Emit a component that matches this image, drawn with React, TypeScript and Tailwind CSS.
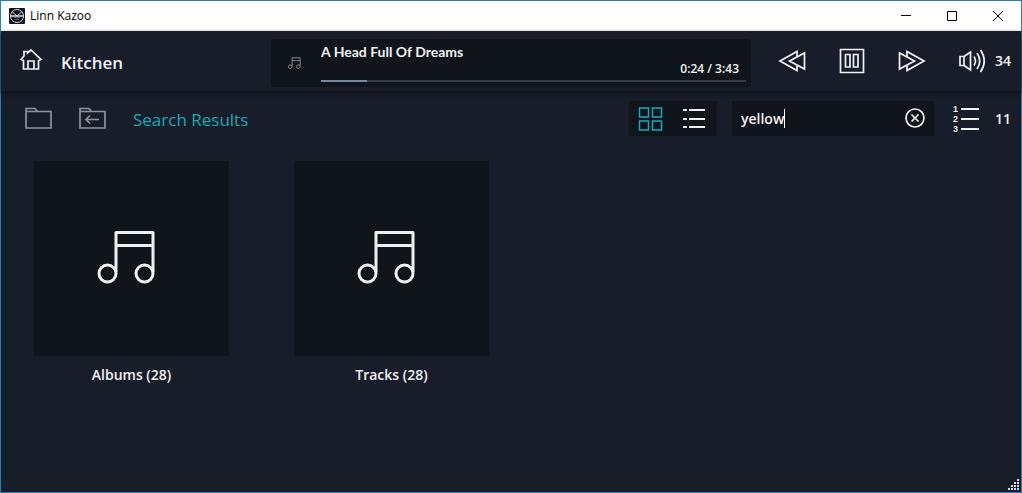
import { useState, type ReactNode } from "react";

function Icon({ w, h, className = "", children }: { w: number; h: number; className?: string; children: ReactNode }) {
  return (
    <svg
      width={w}
      height={h}
      viewBox={`0 0 ${w} ${h}`}
      fill="none"
      stroke="currentColor"
      strokeWidth={1.7}
      className={`shrink-0 ${className}`}
      aria-hidden="true"
    >
      {children}
    </svg>
  );
}

function NoteIcon({ size, className = "" }: { size: number; className?: string }) {
  return (
    <svg
      width={size}
      height={size}
      viewBox="0 0 60 60"
      fill="none"
      stroke="currentColor"
      strokeWidth={3}
      strokeLinejoin="round"
      className={className}
      aria-hidden="true"
    >
      <path d="M19 43V3.500h37V43M19 16.500H56" />
      <circle cx="10.500" cy="44.500" r="8.500" />
      <circle cx="47.500" cy="44.500" r="8.500" />
    </svg>
  );
}

function TitleBar() {
  return (
    <div className="flex h-[30px] items-center bg-white text-black">
      <svg width="16" height="16" viewBox="0 0 16 16" fill="none" className="ml-2" aria-hidden="true">
        <rect width="16" height="16" rx="1" fill="#10141c" />
        <circle cx="8" cy="8" r="6.500" stroke="#d5d9dc" />
        <path d="M1.500 8h13" stroke="#d5d9dc" strokeWidth="1.500" />
        <path d="M3 3.500 8 8l5-4.500" stroke="#d5d9dc" />
        <path d="M5 9.500h6M6 11.500h4" stroke="#59616b" />
      </svg>
      <h1 className="ml-[5px] text-xs">Linn Kazoo</h1>
      <div className="ml-auto flex h-full">
        <button aria-label="Minimize" className="grid w-[46px] place-items-center">
          <svg width="10" height="10" stroke="currentColor" aria-hidden="true">
            <path d="M0 4.500h10" />
          </svg>
        </button>
        <button aria-label="Maximize" className="grid w-[46px] place-items-center">
          <svg width="10" height="10" fill="none" stroke="currentColor" aria-hidden="true">
            <path d="M.5.500h9v9h-9z" />
          </svg>
        </button>
        <button aria-label="Close" className="grid w-[46px] place-items-center">
          <svg width="10" height="10" stroke="currentColor" aria-hidden="true">
            <path d="m0 0 10 10M10 0 0 10" />
          </svg>
        </button>
      </div>
    </div>
  );
}

function NowPlaying() {
  const elapsed = 24;
  const total = 223;

  return (
    <section aria-label="Now playing" className="mb-1 flex h-12 self-end rounded bg-[#10141b] pr-[5px]">
      <div className="grid w-[50px] shrink-0 place-items-center pr-1">
        <NoteIcon size={13} className="text-[#b9bdc2]" />
      </div>
      <div className="flex flex-1 flex-col">
        <h2 className="pt-1 font-['Lato',sans-serif] text-sm leading-[18px] font-bold">A Head Full Of Dreams</h2>
        <p className="pr-[7px] text-right text-xs leading-4 font-semibold">0:24 / 3:43</p>
        <div className="mt-[3px] h-0.5 bg-[#303b4b]">
          <div className="h-full bg-[#76879a]" style={{ width: `${(elapsed / total) * 100}%` }} />
        </div>
      </div>
    </section>
  );
}

function Transport() {
  return (
    <div className="flex items-center pr-2.5 pl-[11px]">
      <button aria-label="Previous" className="grid w-[60px] place-items-center">
        <Icon w={28} h={28}>
          <path d="M19 10V4.500L2 14l17 9.500V18M11.500 14l15-8v16z" />
        </Icon>
      </button>
      <button aria-label="Pause" className="grid w-[60px] place-items-center">
        <Icon w={28} h={28}>
          <path d="M2.500 2.500h23v23h-23zM7.500 7.500h4.500v12.500H7.500zM15.500 7.500H20v12.500h-4.500z" />
        </Icon>
      </button>
      <button aria-label="Next" className="grid w-[60px] place-items-center">
        <Icon w={28} h={28}>
          <path d="M9 10V4.500L26 14 9 23.500V18M16.500 14l-15-8v16z" />
        </Icon>
      </button>
      <button className="ml-auto flex items-center gap-2 text-sm font-semibold" aria-label="Volume 34">
        <Icon w={28} h={28}>
          <path d="M5 9.500H1v9h4M5 9.500v9l6.500 4.500V5z" />
          <path d="M15 9.500q3 4.500 0 9M18 6q5.500 8 0 16M21.500 3q7.500 11 0 22" />
        </Icon>
        34
      </button>
    </div>
  );
}

function Header() {
  return (
    <header className="z-10 grid h-[60px] grid-cols-[1fr_480px_1fr] items-center bg-[#181e29] shadow-[0_2px_4px_#0c1017]">
      <div className="flex items-center gap-[18px] pl-[18px]">
        <button aria-label="Home" className="pb-1">
          <Icon w={24} h={24}>
            <path d="M12 3 22 12.500 19.500 13.500V22h-15v-8.500L2 12.500 5 9V4.500h3.500V6zM9 22v-8h6v8" />
          </Icon>
        </button>
        <button className="pt-1 text-[17px] font-semibold">Kitchen</button>
      </div>
      <NowPlaying />
      <Transport />
    </header>
  );
}

function Toolbar() {
  const [query, setQuery] = useState("yellow");

  return (
    <div className="flex items-center pt-2.5 pr-2.5 pl-6">
      <button aria-label="Root folder" className="text-[#8e939b]">
        <Icon w={27} h={24}>
          <path d="M1 21V1.500h9l2.500 3H26V21zM1 4.500h12" />
        </Icon>
      </button>
      <button aria-label="Parent folder" className="ml-[27px] text-[#8e939b]">
        <Icon w={27} h={24}>
          <path d="M1 21V1.500h9l2.500 3H26V21zM1 4.500h12" />
          <path d="M20 12.500H7M11 8.500l-4 4 4 4" />
        </Icon>
      </button>
      <h2 className="ml-[27px] pt-0.5 text-[17px] text-[#21a5ba]">Search Results</h2>

      <div className="ml-auto flex h-[35px] items-center gap-4 bg-[#10141b] px-2">
        <button aria-label="Grid view" className="text-[#21a5ba]">
          <Icon w={28} h={28}>
            <path strokeWidth="1.500" d="M2.500 3h9v9h-9zM15.500 3h9v9h-9zM2.500 16h9v9h-9zM15.500 16h9v9h-9z" />
          </Icon>
        </button>
        <button aria-label="List view">
          <Icon w={28} h={28}>
            <path strokeWidth="2" d="M2 5h4M8 5h16M2 14h4M8 14h16M2 22h4M8 22h16" />
          </Icon>
        </button>
      </div>

      <div className="ml-[15px] flex h-[35px] w-[202px] items-center bg-[#10141b] pr-2 pl-[9px]">
        <input
          type="text"
          aria-label="Search"
          value={query}
          onChange={(e) => setQuery(e.target.value)}
          className="field-sizing-content max-w-[155px] text-sm font-semibold caret-transparent outline-none"
        />
        <span className="h-[19px] w-px bg-white" />
        <button aria-label="Clear search" className="ml-auto" onClick={() => setQuery("")}>
          <Icon w={22} h={22}>
            <circle cx="11" cy="10" r="9" />
            <path d="m7.500 6.500 7 7M14.500 6.500l-7 7" />
          </Icon>
        </button>
      </div>

      <button aria-label="11 items" className="ml-[19px] flex items-center gap-4 text-sm font-semibold">
        <span className="flex flex-col font-['Liberation_Sans',sans-serif] text-[9px] leading-[10px] font-bold">
          {[1, 2, 3].map((n) => (
            <span key={n} className="flex items-center gap-[3px]">
              {n}
              <span className="h-0.5 w-[18px] bg-current" />
            </span>
          ))}
        </span>
        11
      </button>
    </div>
  );
}

function Tile({ label }: { label: string }) {
  return (
    <button className="flex w-[195px] flex-col items-center">
      <span className="grid aspect-square w-full place-items-center bg-[#10141b] pr-2.5">
        <NoteIcon size={60} />
      </span>
      <span className="pt-[9px] text-sm leading-5 font-semibold">{label}</span>
    </button>
  );
}

function ResizeGrip() {
  return (
    <svg width="11" height="11" fill="#d8dade" className="mt-auto mr-0.5 mb-0.5 self-end" aria-hidden="true">
      <path d="M9 0h2v2H9zM6 3h2v2H6zM9 3h2v2H9zM3 6h2v2H3zM6 6h2v2H6zM9 6h2v2H9zM0 9h2v2H0zM3 9h2v2H3zM6 9h2v2H6zM9 9h2v2H9z" />
    </svg>
  );
}

export default function App() {
  return (
    <div className="flex min-h-screen flex-col border border-[#2f7ab8] bg-[#181e29] font-['Open_Sans',sans-serif] text-[#f0f1f2]">
      <TitleBar />
      <Header />
      <Toolbar />
      <main className="flex flex-wrap gap-x-[65px] gap-y-8 px-[33px] pt-[25px]">
        <Tile label="Albums (28)" />
        <Tile label="Tracks (28)" />
      </main>
      <ResizeGrip />
    </div>
  );
}
